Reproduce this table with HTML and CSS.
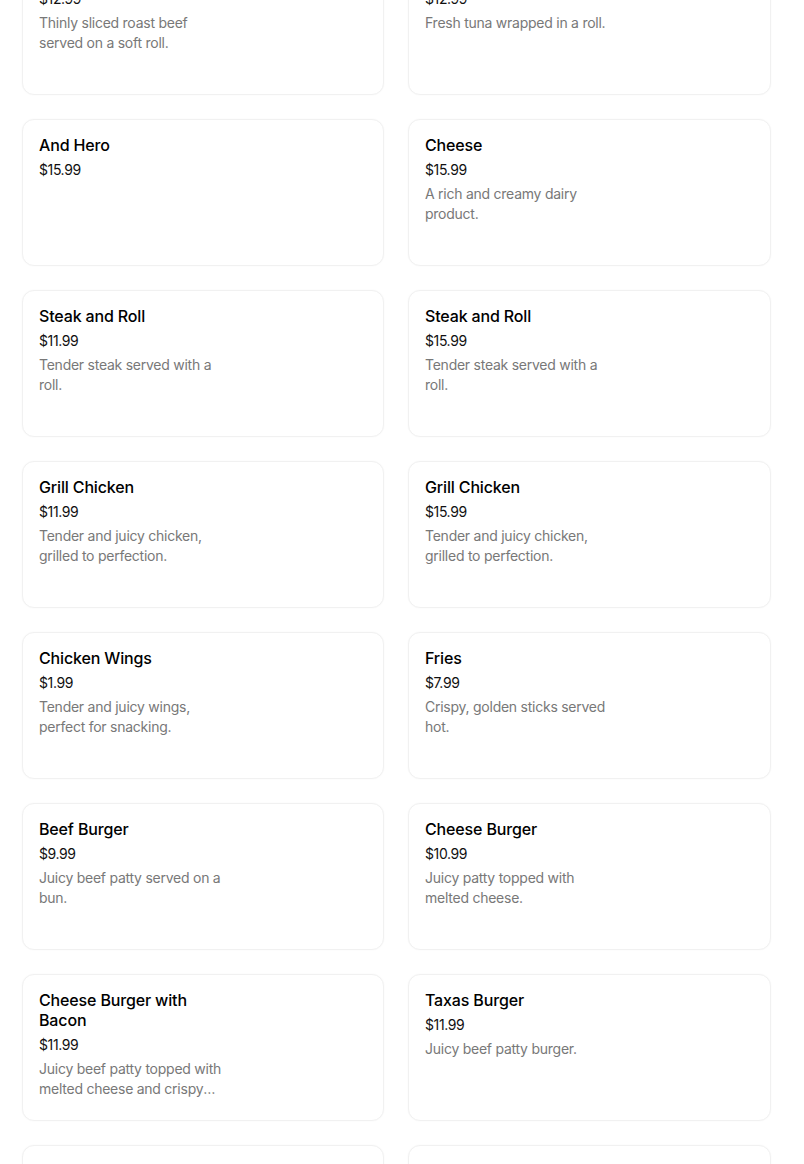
FILE: index.html
```html
<!DOCTYPE html>
<html lang="en">
<head>
<meta charset="utf-8">
<title>Menu</title>
<link rel="stylesheet" href="styles.css">
</head>
<body>
<main class="menu">
  <div class="card"><div class="info"><h3 class="name">Roast Beef</h3><p class="price">$12.99</p><p class="desc">Thinly sliced roast beef served on a soft roll.</p></div></div>
  <div class="card"><div class="info"><h3 class="name">Tuna Roll</h3><p class="price">$12.99</p><p class="desc">Fresh tuna wrapped in a roll.</p></div></div>

  <div class="card"><div class="info"><h3 class="name">And Hero</h3><p class="price">$15.99</p></div></div>
  <div class="card"><div class="info"><h3 class="name">Cheese</h3><p class="price">$15.99</p><p class="desc">A rich and creamy dairy product.</p></div></div>

  <div class="card"><div class="info"><h3 class="name">Steak and Roll</h3><p class="price">$11.99</p><p class="desc">Tender steak served with a roll.</p></div></div>
  <div class="card"><div class="info"><h3 class="name">Steak and Roll</h3><p class="price">$15.99</p><p class="desc">Tender steak served with a roll.</p></div></div>

  <div class="card"><div class="info"><h3 class="name">Grill Chicken</h3><p class="price">$11.99</p><p class="desc">Tender and juicy chicken, grilled to perfection.</p></div></div>
  <div class="card"><div class="info"><h3 class="name">Grill Chicken</h3><p class="price">$15.99</p><p class="desc">Tender and juicy chicken, grilled to perfection.</p></div></div>

  <div class="card"><div class="info"><h3 class="name">Chicken Wings</h3><p class="price">$1.99</p><p class="desc">Tender and juicy wings, perfect for snacking.</p></div></div>
  <div class="card"><div class="info"><h3 class="name">Fries</h3><p class="price">$7.99</p><p class="desc">Crispy, golden sticks served hot.</p></div></div>

  <div class="card"><div class="info"><h3 class="name">Beef Burger</h3><p class="price">$9.99</p><p class="desc">Juicy beef patty served on a bun.</p></div></div>
  <div class="card"><div class="info"><h3 class="name">Cheese Burger</h3><p class="price">$10.99</p><p class="desc">Juicy patty topped with melted cheese.</p></div></div>

  <div class="card"><div class="info"><h3 class="name">Cheese Burger with Bacon</h3><p class="price">$11.99</p><p class="desc">Juicy beef patty topped with melted cheese and crispy bacon strips.</p></div></div>
  <div class="card"><div class="info"><h3 class="name">Taxas Burger</h3><p class="price">$11.99</p><p class="desc">Juicy beef patty burger.</p></div></div>

  <div class="card loading"><div class="info"><h3 class="name">Chicken Sub</h3><p class="price">$12.99</p></div></div>
  <div class="card loading"><div class="info"><h3 class="name">Fish Fillet</h3><p class="price">$12.99</p></div></div>
</main>
</body>
</html>
```

FILE: styles.css
```css
html, body {
  margin: 0;
  padding: 0;
  background: #ffffff;
}

body {
  font-family: Inter, "Noto Sans", "Liberation Sans", sans-serif;
  color: #000000;
  overflow: hidden;
}

.menu {
  width: 749px;
  margin: -52px 0 0 22px;
  display: grid;
  grid-template-columns: 362px 363px;
  gap: 24px;
}

.card {
  box-sizing: border-box;
  height: 147px;
  border: 1px solid #f1f1f1;
  border-radius: 12px;
  box-shadow: 0 0 2px rgba(0, 0, 0, 0.035);
  background: #ffffff;
  padding: 15px 16px;
  display: flex;
}

.info {
  width: 196px;
  display: flex;
  flex-direction: column;
}

.name {
  margin: 0 0 5px;
  font-size: 16px;
  line-height: 20px;
  font-weight: 500;
  letter-spacing: -0.15px;
}

.price {
  margin: 0 0 4px;
  font-size: 14px;
  line-height: 20px;
  font-weight: 400;
  letter-spacing: -0.4px;
  color: #111111;
}

.desc {
  margin: 0;
  font-size: 14px;
  line-height: 20px;
  color: #787878;
  letter-spacing: -0.25px;
  display: -webkit-box;
  -webkit-box-orient: vertical;
  -webkit-line-clamp: 2;
  overflow: hidden;
}

.loading .info {
  opacity: 0.1;
}
```
